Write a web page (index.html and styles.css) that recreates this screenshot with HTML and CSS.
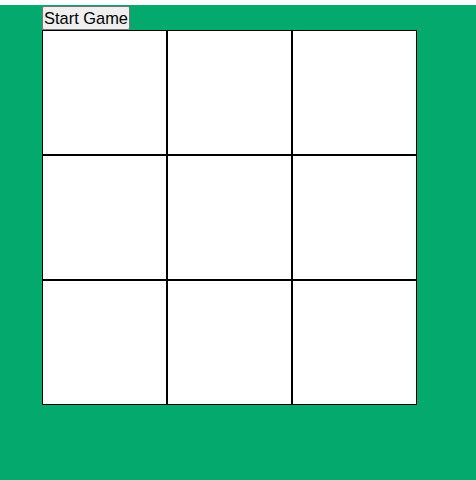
FILE: index.html
```html
<!DOCTYPE html>
<html>
<head>
<meta charset="utf-8">
<link rel="stylesheet" href="styles.css">
</head>
<body>
<div class="app">
  <button class="start">Start Game</button>
  <div class="board">
    <div class="cell"></div><div class="cell"></div><div class="cell"></div>
    <div class="cell"></div><div class="cell"></div><div class="cell"></div>
    <div class="cell"></div><div class="cell"></div><div class="cell"></div>
  </div>
</div>
</body>
</html>
```
FILE: styles.css
```css
html, body {
  margin: 0;
  background: #ffffff;
}
.app {
  margin-top: 5px;
  min-height: 475px;
  background: #04aa6d;
  padding: 1px 0 0 42px;
  box-sizing: border-box;
}
.start {
  display: block;
  font: 16.4px "Liberation Sans", Arial, sans-serif;
  color: #000;
  background: #efefef;
  border: 1px solid #767676;
  border-radius: 2px;
  padding: 1px 1px;
  margin: 0;
  width: 88px;
  height: 24px;
}
.board {
  display: grid;
  grid-template-columns: repeat(3, 125px);
  grid-template-rows: repeat(3, 125px);
  width: 375px;
}
.cell {
  box-sizing: border-box;
  border: 1px solid #000;
  background: #fff;
}
```
